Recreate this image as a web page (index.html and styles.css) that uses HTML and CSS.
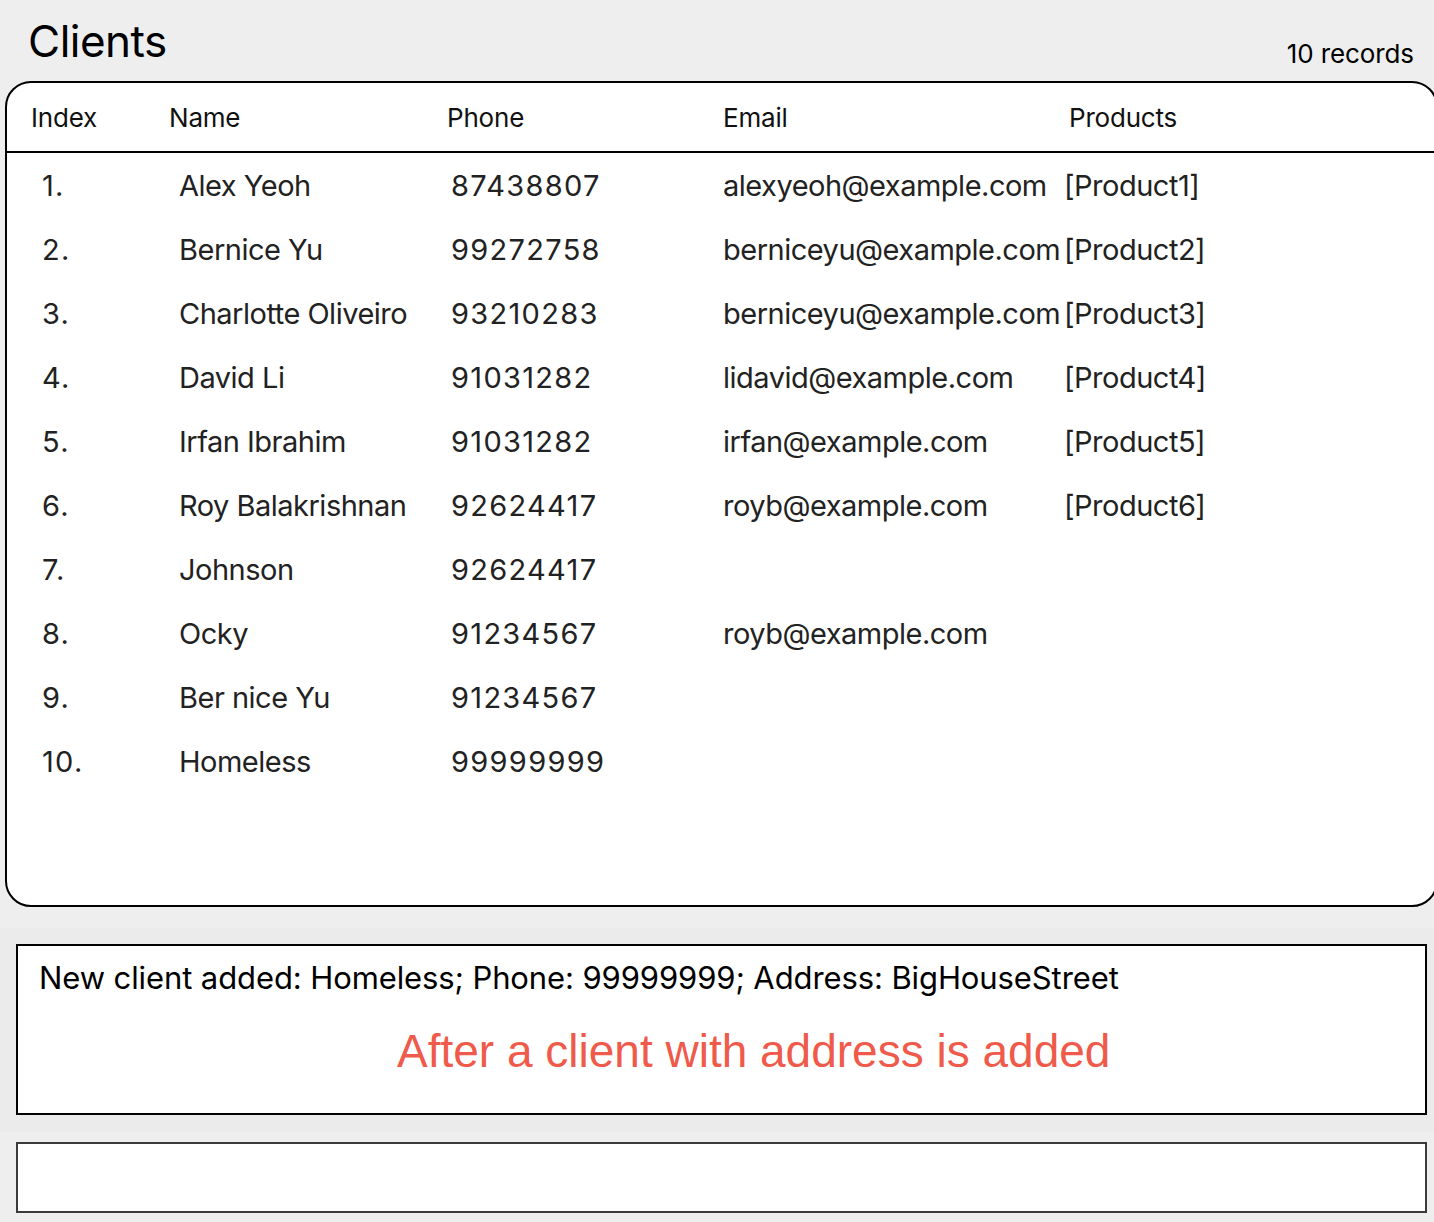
FILE: index.html
```html
<!DOCTYPE html>
<html>
<head>
<meta charset="utf-8">
<link rel="stylesheet" href="styles.css">
</head>
<body>
<div class="top">
  <h1 class="title">Clients</h1>
  <div class="count">10 records</div>
</div>
<div class="panel">
  <div class="thead">
    <div>Index</div><div>Name</div><div>Phone</div><div>Email</div><div>Products</div>
  </div>
  <div class="row"><div class="num">1.</div><div>Alex Yeoh</div><div class="num">87438807</div><div>alexyeoh@example.com</div><div>[Product1]</div></div>
  <div class="row"><div class="num">2.</div><div>Bernice Yu</div><div class="num">99272758</div><div>berniceyu@example.com</div><div>[Product2]</div></div>
  <div class="row"><div class="num">3.</div><div>Charlotte Oliveiro</div><div class="num">93210283</div><div>berniceyu@example.com</div><div>[Product3]</div></div>
  <div class="row"><div class="num">4.</div><div>David Li</div><div class="num">91031282</div><div>lidavid@example.com</div><div>[Product4]</div></div>
  <div class="row"><div class="num">5.</div><div>Irfan Ibrahim</div><div class="num">91031282</div><div>irfan@example.com</div><div>[Product5]</div></div>
  <div class="row"><div class="num">6.</div><div>Roy Balakrishnan</div><div class="num">92624417</div><div>royb@example.com</div><div>[Product6]</div></div>
  <div class="row"><div class="num">7.</div><div>Johnson</div><div class="num">92624417</div><div></div><div></div></div>
  <div class="row"><div class="num">8.</div><div>Ocky</div><div class="num">91234567</div><div>royb@example.com</div><div></div></div>
  <div class="row"><div class="num">9.</div><div>Ber nice Yu</div><div class="num">91234567</div><div></div><div></div></div>
  <div class="row"><div class="num">10.</div><div>Homeless</div><div class="num">99999999</div><div></div><div></div></div>
</div>
<div class="result-band">
  <div class="result-box">
    <div class="result-text">New client added: Homeless; Phone: 99999999; Address: BigHouseStreet</div>
    <div class="note">After a client with address is added</div>
  </div>
</div>
<div class="command-band">
  <div class="command-box"></div>
</div>
</body>
</html>
```
FILE: styles.css
```css
html, body {
  margin: 0;
  padding: 0;
  overflow: hidden;
}
body {
  background: #eeeeee;
  font-family: Inter, "Noto Sans", sans-serif;
  color: #000;
  width: 1434px;
  height: 1222px;
}
.top {
  height: 81px;
  display: flex;
  justify-content: space-between;
  align-items: flex-end;
  padding: 0 20px 0 28px;
  box-sizing: border-box;
}
.title {
  margin: 0;
  font-weight: 400;
  font-size: 44px;
  line-height: 1;
  letter-spacing: -0.5px;
  position: relative;
  top: -18px;
}
.count {
  font-size: 26px;
  line-height: 1;
  letter-spacing: -0.1px;
  position: relative;
  top: -14px;
}
.panel {
  margin-left: 5px;
  width: 1433px;
  height: 826px;
  box-sizing: border-box;
  border: 2px solid #000;
  border-radius: 26px;
  background: #fff;
  overflow: hidden;
}
.thead {
  height: 70px;
  box-sizing: border-box;
  border-bottom: 2px solid #000;
  display: grid;
  grid-template-columns: 138px 278px 276px 346px 1fr;
  padding-left: 24px;
  align-items: center;
  font-size: 26px;
  letter-spacing: -0.2px;
  color: #111;
}
.row {
  height: 64px;
  display: grid;
  grid-template-columns: 137px 272px 272px 341px 1fr;
  padding-left: 35px;
  align-items: center;
  font-size: 29px;
  letter-spacing: -0.5px;
  color: #222;
  white-space: nowrap;
}
.row > .num {
  letter-spacing: 1.3px;
}
.result-band {
  margin-top: 21px;
  background: #ebebeb;
  padding: 16px 7px 17px 16px;
}
.result-box {
  height: 171px;
  box-sizing: border-box;
  border: 2px solid #000;
  background: #fff;
  padding: 14px 0 0 21px;
}
.result-text {
  font-size: 31px;
  letter-spacing: -0.1px;
  line-height: 36px;
}
.note {
  font-family: "Liberation Sans", Arial, sans-serif;
  font-size: 46px;
  color: #ef5a4a;
  line-height: 52px;
  margin-top: 29px;
  padding-left: 358px;
}
.command-band {
  padding: 10px 7px 9px 16px;
}
.command-box {
  height: 71px;
  box-sizing: border-box;
  border: 2px solid #3a3a3a;
  background: #fff;
}
```
